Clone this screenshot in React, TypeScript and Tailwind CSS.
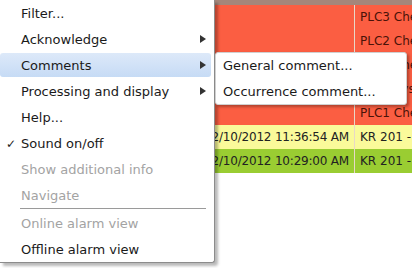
const font = { fontFamily: '"DejaVu Sans", Verdana, sans-serif' };

interface Row {
  date: string;
  text: string;
  bg: string;
}

const rows: Row[] = [
  { date: "", text: "PLC3  Che", bg: "bg-[#fb5e42]" },
  { date: "", text: "PLC2 Che", bg: "bg-[#fb5e42]" },
  { date: "", text: "PLC4 Che", bg: "bg-[#fb5e42]" },
  { date: "", text: "PLC5 Sys", bg: "bg-[#fb5e42]" },
  { date: "", text: "PLC1 Che", bg: "bg-[#fb5e42]" },
  { date: "12/10/2012 11:36:54 AM", text: "KR 201 -", bg: "bg-[#fafa9a]" },
  { date: "12/10/2012 10:29:00 AM", text: "KR 201 -", bg: "bg-[#9acd32]" },
];

function Arrow() {
  return (
    <svg width="6" height="8" viewBox="0 0 6 8" className="absolute right-[8px] top-[9px]">
      <path d="M0 0 L6 4 L0 8 Z" fill="#333" />
    </svg>
  );
}

interface ItemProps {
  label: string;
  arrow?: boolean;
  disabled?: boolean;
  checked?: boolean;
  active?: boolean;
}

function Item({ label, arrow, disabled, checked, active }: ItemProps) {
  return (
    <div className="relative h-[26px]">
      {active && (
        <div className="absolute left-0 right-[3px] top-px bottom-px rounded-[3px] bg-gradient-to-b from-[#dde9f9] to-[#c6dbf5]" />
      )}
      {checked && (
        <span className="absolute left-[6px] top-px leading-[26px] text-[12px] text-[#222]">✓</span>
      )}
      <span
        className={`relative top-px block pl-[21px] leading-[26px] text-[13px] whitespace-nowrap ${
          disabled ? "text-[#a3a3a3]" : "text-[#1a1a1a]"
        }`}
      >
        {label}
      </span>
      {arrow && <Arrow />}
    </div>
  );
}

export default function App() {
  return (
    <div className="relative w-[412px] h-[268px] bg-white overflow-hidden" style={font}>
      {/* alarm table underneath */}
      <div className="flex flex-col">
        <div className="h-[5px] bg-[#a5867a]" />
        {rows.map((r, i) => (
          <div key={i} className={`flex h-[24px] ${r.bg}`}>
            <div className="w-[355px] shrink-0 flex justify-end items-center pr-[5px] border-r border-[#e8d8c8] text-[12px] tracking-[-0.2px] text-[#222] whitespace-nowrap">
              {r.date}
            </div>
            <div
              className={`pl-[5px] flex items-center text-[12px] whitespace-nowrap overflow-hidden ${
                i < 5 ? "text-[#4a1208]" : "text-[#222]"
              }`}
            >
              {r.text}
            </div>
          </div>
        ))}
      </div>

      {/* context menu */}
      <div className="absolute left-0 top-0 w-[215px] h-[263px] bg-white border-r border-b border-[#8c8c8c] rounded-br-[3px] shadow-[3px_3px_3px_rgba(0,0,0,0.28)]">
        <Item label="Filter..." />
        <Item label="Acknowledge" arrow />
        <Item label="Comments" arrow active />
        <Item label="Processing and display" arrow />
        <Item label="Help..." />
        <Item label="Sound on/off" checked />
        <Item label="Show additional info" disabled />
        <Item label="Navigate" disabled />
        <div className="ml-[20px] mr-[8px] h-px bg-[#9a9a9a] mb-px" />
        <Item label="Online alarm view" disabled />
        <Item label="Offline alarm view" />
      </div>

      {/* submenu */}
      <div className="absolute left-[215px] top-[52px] w-[192px] h-[53px] bg-white rounded-[3px] border border-[#d0d0d0] shadow-[2px_2px_3px_rgba(0,0,0,0.3)]">
        <div className="h-[26px] pl-[7px] leading-[26px] text-[13px] text-[#1a1a1a] whitespace-nowrap">
          General comment...
        </div>
        <div className="h-[26px] pl-[7px] leading-[26px] text-[13px] text-[#1a1a1a] whitespace-nowrap">
          Occurrence comment...
        </div>
      </div>
    </div>
  );
}
